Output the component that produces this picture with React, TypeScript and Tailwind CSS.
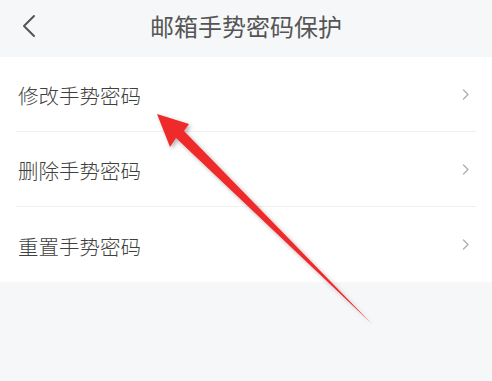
import React from "react";

const rows = ["修改手势密码", "删除手势密码", "重置手势密码"];

function Chevron() {
  return (
    <svg width="8" height="11" viewBox="0 0 8 11" fill="none">
      <path d="M1.5 1 L6 5.5 L1.5 10" stroke="#b0b0b0" strokeWidth="1.4" strokeLinecap="round" strokeLinejoin="round" />
    </svg>
  );
}

export default function App() {
  return (
    <div
      className="relative w-[492px] h-[381px] overflow-hidden bg-[#f6f7f9]"
      style={{ fontFamily: '"Noto Sans CJK SC", "Noto Sans", sans-serif' }}
    >
      <div className="relative h-[57px] flex items-center justify-center">
        <svg className="absolute left-[21px] top-[14px]" width="16" height="24" viewBox="0 0 16 24" fill="none">
          <path d="M13 2 L3 12 L13 22" stroke="#555" strokeWidth="2" strokeLinecap="round" strokeLinejoin="round" />
        </svg>
        <div className="text-[24px] leading-none font-normal text-[#555] -mt-[6px]">邮箱手势密码保护</div>
      </div>
      <div className="bg-white">
        {rows.map((r, i) => (
          <div key={r} className="px-4">
            <div
              className={
                "h-[75px] flex items-center justify-between pl-[2px] pr-[6px] " +
                (i < rows.length - 1 ? "border-b border-[#efefef]" : "")
              }
            >
              <span className="text-[20.5px] leading-none font-light text-[#3f3f3f] mt-[3px]">{r}</span>
              <Chevron />
            </div>
          </div>
        ))}
      </div>
      <svg className="absolute left-0 top-0 pointer-events-none" width="492" height="381" viewBox="0 0 492 381">
        <defs>
          <filter id="sh" x="-20%" y="-20%" width="140%" height="140%">
            <feDropShadow dx="2" dy="2" stdDeviation="2" floodColor="#000" floodOpacity="0.3" />
          </filter>
        </defs>
        <polygon
          points="157,114 189,124 184,131 371,323 176,138 170,147"
          fill="#ef2b2b"
          filter="url(#sh)"
        />
      </svg>
    </div>
  );
}
